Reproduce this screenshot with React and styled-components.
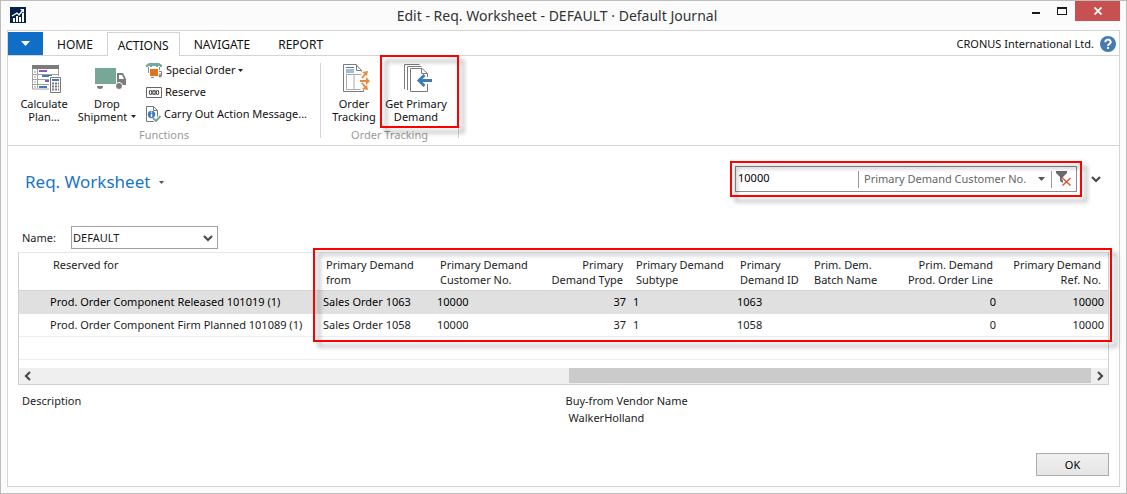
import React from "react";
import styled, { createGlobalStyle } from "styled-components";

const GlobalStyle = createGlobalStyle`
  *, *::before, *::after { box-sizing: border-box; }
  body {
    margin: 0;
    background: #fbfbfb;
    color: #1c1c1c;
    font: 11px/16px "Segoe UI", "Noto Sans", "Open Sans", sans-serif;
  }
  button, input, select { font: inherit; color: inherit; }
  button { background: none; border: 0; padding: 0; cursor: pointer; }
  svg { display: block; flex: none; }
`;

const Window = styled.div`
  display: flex;
  flex-direction: column;
  min-height: 100vh;
  padding: 0 6px 6px;
  border: 1px solid #bdbdbd;
  background: #fbfbfb;
`;

const TitleBar = styled.header`
  display: grid;
  grid-template-columns: 1fr auto 1fr;
  height: 29px;
  padding-left: 3px;
`;

const AppLogo = styled.div`
  padding-top: 6px;
`;

const WindowTitle = styled.div`
  margin-right: 16px;
  color: #333;
  font-size: 14px;
  line-height: 29px;
`;

const WindowButtons = styled.div`
  display: flex;
  justify-content: flex-end;
`;

const WindowButton = styled.button`
  display: flex;
  align-items: center;
  justify-content: center;
  width: ${(p) => (p.$close ? 45 : 26)}px;
  height: 20px;
  background: ${(p) => (p.$close ? "#c75050" : "transparent")};
`;

const Frame = styled.div`
  display: flex;
  flex: 1;
  flex-direction: column;
  border: 1px solid #d4d4d4;
  background: #fff;
`;

const TabBar = styled.nav`
  display: flex;
  height: 25px;
  padding-top: 1px;
  border-bottom: 1px solid #d4d4d4;
`;

const AppMenuButton = styled.button`
  display: flex;
  align-items: center;
  justify-content: center;
  width: 35px;
  height: 23px;
  background: #106ec6;
`;

const Tab = styled.button`
  height: ${(p) => (p.$active ? 24 : 23)}px;
  padding: 2px ${(p) => (p.$active ? 10 : 14)}px 0;
  color: #111;
  font-size: 12px;
  border: solid #d4d4d4;
  border-width: ${(p) => (p.$active ? "1px 1px 0" : "0")};
  background: #fff;
`;

const Company = styled.div`
  display: flex;
  gap: 6px;
  align-items: center;
  margin-left: auto;
  padding-right: 3px;
  color: #111;
`;

const Ribbon = styled.section`
  display: flex;
  height: 90px;
  padding: 7px 0;
  border-bottom: 1px solid #d4d4d4;
`;

const Group = styled.div`
  display: flex;
  flex-direction: column;
  justify-content: space-between;
  width: ${(p) => p.$width}px;
  padding: 0 4px;
  border-right: 1px solid #d4d4d4;
`;

const Commands = styled.div`
  display: flex;
  height: 60px;
`;

const GroupLabel = styled.div`
  color: #9a9a9a;
  line-height: 16px;
  text-align: center;
  white-space: nowrap;
  margin-bottom: -5px;
`;

const LargeCommand = styled.button`
  position: relative;
  display: flex;
  flex-direction: column;
  align-items: center;
  width: ${(p) => p.$width}px;
  color: #111;
  line-height: 13px;
  white-space: nowrap;
`;

const LargeIcon = styled.span`
  display: flex;
  height: 34px;
  padding: 1px 0 0 6px;
`;

const CommandLine = styled.span`
  display: flex;
  gap: 4px;
  align-items: center;
`;

const SmallCommands = styled.div`
  display: flex;
  flex-direction: column;
  padding-left: 8px;
`;

const SmallCommand = styled.button`
  display: flex;
  gap: 3px;
  align-items: center;
  height: 22px;
  padding-bottom: 8px;
  color: #111;
  white-space: nowrap;
`;

const Highlight = styled.span`
  position: absolute;
  inset: ${(p) => p.$inset};
  z-index: 1;
  border: 2px solid #f00;
  filter: drop-shadow(5px 5px 2px rgba(0, 0, 0, 0.35));
  pointer-events: none;
`;

const Page = styled.main`
  display: flex;
  flex: 1;
  flex-direction: column;
  padding: 20px 10px;
  padding-bottom: 10px;
`;

const PageHeader = styled.div`
  display: flex;
  align-items: flex-start;
  justify-content: space-between;
  padding: 0 8px 0 7px;
`;

const PageTitle = styled.h1`
  display: flex;
  gap: 9px;
  align-items: center;
  margin: 4px 0 0;
  color: #1a74c8;
  font-size: 17px;
  font-weight: 400;
  line-height: 24px;
`;

const FilterArea = styled.div`
  display: flex;
  gap: 14px;
  align-items: center;
`;

const FilterBox = styled.form`
  position: relative;
  display: flex;
  align-items: center;
  width: 342px;
  height: 26px;
  border: 1px solid #8c8c8c;
  color: #666;
`;

const FilterInput = styled.input`
  flex: 1;
  min-width: 0;
  height: 22px;
  padding: 0 2px 4px;
  border: 0;
  outline: 0;
  background: none;
  color: #000;
`;

const FieldPicker = styled.div`
  display: flex;
  align-items: center;
  height: 17px;
  padding-right: 6px;
  border: solid #9a9a9a;
  border-width: 0 1px;
`;

const FieldSelect = styled.select`
  width: 179px;
  padding: 0 0 0 5px;
  border: 0;
  appearance: none;
  background: none;
`;

const ClearFilter = styled.button`
  width: 24px;
  padding-left: 4px;
`;

const NameRow = styled.div`
  display: flex;
  align-items: center;
  margin: 32px 0 3px;
  padding-left: 4px;
`;

const NameLabel = styled.label`
  width: 49px;
`;

const SelectBox = styled.div`
  display: flex;
  align-items: center;
  width: 147px;
  height: 23px;
  padding-right: 4px;
  border: 1px solid #a0a0a8;
`;

const NameSelect = styled.select`
  flex: 1;
  height: 21px;
  padding: 0 1px;
  border: 0;
  appearance: none;
  background: none;
`;

const GridBox = styled.div`
  position: relative;
  border: 1px solid #d0d0d0;
  border-top-color: #e6e6e6;
`;

const Grid = styled.table`
  width: 100%;
  border-collapse: separate;
  border-spacing: 0;
  table-layout: fixed;
`;

const Col = styled.col`
  width: ${(p) => (p.$width ? p.$width + "px" : "auto")};
`;

const HeaderCell = styled.th`
  height: 38px;
  padding: 4px ${(p) => (p.$right ? 7 : 0)}px 3px ${(p) => (p.$first ? 34 : p.$right ? 0 : 6)}px;
  border-bottom: 1px solid #d4d4d4;
  font-weight: 400;
  line-height: 15px;
  text-align: ${(p) => (p.$right ? "right" : "left")};
  vertical-align: top;
  white-space: pre;
`;

const Row = styled.tr`
  background: ${(p) => (p.$selected ? "#e0e0e0" : "#fff")};
  color: ${(p) => (p.$selected ? "#000" : "inherit")};
`;

const Cell = styled.td`
  height: 23px;
  padding: 0 4px 0 ${(p) => (p.$first ? 31 : 3)}px;
  border-bottom: 1px solid ${(p) => (p.$selected ? "#e0e0e0" : "#ececec")};
  line-height: 16px;
  text-align: ${(p) => (p.$right ? "right" : "left")};
  white-space: nowrap;
`;

const ScrollBar = styled.div`
  display: flex;
  align-items: center;
  height: 16px;
  margin-top: 8px;
  border-bottom: 1px solid #efefef;
  background: #efefef;
`;

const ScrollButton = styled.button`
  display: flex;
  justify-content: center;
  width: 17px;
`;

const ScrollTrack = styled.div`
  display: flex;
  flex: 1;
  justify-content: flex-end;
  height: 15px;
`;

const ScrollThumb = styled.div`
  width: 49.5%;
  background: #cbcbcb;
`;

const Details = styled.dl`
  display: grid;
  grid-template-columns: 1fr 1fr;
  margin: 8px 0 0;
  padding-left: 4px;
`;

const DetailTerm = styled.dt`
  line-height: 16px;
`;

const DetailValue = styled.dd`
  margin: 0;
  padding-left: 3px;
  line-height: 17px;
`;

const Footer = styled.footer`
  display: flex;
  justify-content: flex-end;
  margin-top: auto;
`;

const OkButton = styled.button`
  width: 73px;
  height: 23px;
  border: 1px solid #acacac;
  background: linear-gradient(#f0f0f0, #e5e5e5);
  color: #000;
`;

const Triangle = ({ width = 5, height = 3, color = "#222" }) => (
  <svg width={width} height={height} viewBox="0 0 10 6" preserveAspectRatio="none" aria-hidden="true">
    <path d="M0 0h10L5 6z" fill={color} />
  </svg>
);

const Chevron = ({ direction = "down", width = 10, height = 10 }) => {
  const paths = { down: "M1 3l4 4 4-4", left: "M7 1L3 5l4 4", right: "M3 1l4 4-4 4" };
  return (
    <svg width={width} height={height} viewBox="0 0 10 10" aria-hidden="true">
      <path d={paths[direction]} fill="none" stroke="#4a4a4a" strokeWidth="2.2" />
    </svg>
  );
};

const LogoIcon = () => (
  <svg width="16" height="16" viewBox="0 0 16 16" aria-hidden="true">
    <path fill="#03214f" d="M0 0h16v16H0z" />
    <path fill="#fff" d="M3 11h2v4H3zM6 9h2v6H6zM9 10h2v5H9zM12 6h2v9h-2z" />
    <path d="M2 9l5-3 2 2 4-5" fill="none" stroke="#fff" strokeWidth="1.3" />
    <path fill="#fff" d="M10 2h4v4z" />
  </svg>
);

const HelpIcon = () => (
  <svg width="16" height="16" viewBox="0 0 16 16" aria-hidden="true">
    <circle cx="8" cy="8" r="8" fill="#457ab3" />
    <path d="M5.3 6.2C5.3 2.8 10.7 2.8 10.7 6c0 2-2.7 2-2.7 4" fill="none" stroke="#fff" strokeWidth="2" />
    <path fill="#fff" d="M7 11h2v2H7z" />
  </svg>
);

const CalculateIcon = () => (
  <svg width="30" height="29" viewBox="0 0 30 29" aria-hidden="true">
    <path fill="#7b7b7b" d="M0 1h27v4H0z" />
    <path d="M.5 5v20H17M26.5 5v7M0 10.5h26M0 15.5h17M0 20.5h17M5.5 5v19" fill="none" stroke="#a2a2a2" />
    <path d="M2 8h2M2 13h2M2 18h2M2 23h2" stroke="#999" />
    <path fill="#8a5cb0" d="M7 6h8v2H7zM13 16h4v2h-4z" />
    <path fill="#3f7bb8" d="M10 11h10v2H10zM7 22h8v2H7z" />
    <path fill="#fff" d="M17 12h13v17H17z" />
    <path fill="#fff" stroke="#777" d="M18.500 13.500h10v15h-10z" />
    <path fill="#3f7bb8" d="M20 15h7v2h-7z" />
    <path d="M20 19.500h7M20 22.500h7M20 25.500h7" stroke="#777" strokeWidth="2" strokeDasharray="2 1" />
  </svg>
);

const TruckIcon = () => (
  <svg width="31" height="29" viewBox="0 0 31 29" aria-hidden="true">
    <path fill="#76a797" d="M0 4h21v16H0z" />
    <path fill="#7b7b7b" fillRule="evenodd" d="M22 9h6l3 6v6h-9zM24 11v4h5l-2-4z" />
    <circle cx="24" cy="22" r="3.500" fill="#7b7b7b" stroke="#fff" />
    <path fill="#7b7b7b" d="M2 22h6c0 2-1 3-3 3s-3-1-3-3z" />
  </svg>
);

const TrackingIcon = () => (
  <svg width="28" height="29" viewBox="0 0 28 29" aria-hidden="true">
    <path d="M18.500 7.500V6.500L13 .500H.500v27h20v-2M13.500.500v6h5" fill="#fff" stroke="#7b7b7b" />
    <path d="M3 3.500h8M3 6h8M3 8h8" stroke="#3f7bb8" />
    <path d="M3.500 10.500h15M3.500 10v15.500h14M11 10v15" fill="none" stroke="#aaa" />
    <path d="M17 17h7M19 14l4-5M19 19l4 5" stroke="#e88b42" strokeWidth="2" fill="none" />
    <path fill="#e88b42" d="M27 17l-4-4v8zM25 7l-6 1 5 4zM25 26l-6-1 5-4z" />
  </svg>
);

const DemandIcon = () => (
  <svg width="30" height="29" viewBox="0 0 30 29" aria-hidden="true">
    <path d="M.500 25V.500h15M3.500 26V2.500h14" fill="none" stroke="#7b7b7b" />
    <path d="M23.500 13V9.500L18 4.500H6.500v23h17V20M17.500 4.500v5h6" fill="#fff" stroke="#7b7b7b" />
    <path d="M15 16.500h13" stroke="#3f7bb8" strokeWidth="3" />
    <path d="M20.500 11L15 16.500l5.500 5.500" stroke="#3f7bb8" strokeWidth="3" fill="none" />
  </svg>
);

const SpecialOrderIcon = () => (
  <svg width="17" height="15" viewBox="0 0 17 15" aria-hidden="true">
    <path fill="#76a797" d="M3 0h10l3 2v2h-2V3h-2v1h-2V3H6v1H4V3H2v1H0V2z" />
    <path d="M2.500 4v6M13.500 4v3" stroke="#8a8a8a" />
    <path fill="#e0731d" d="M4 6h8v7H4z" />
    <path d="M13 8.500h2.500V13M13 11h2" fill="none" stroke="#888" />
    <path d="M5 14.500h3" stroke="#888" />
    <circle cx="14" cy="13" r="1.500" fill="#888" />
  </svg>
);

const ReserveIcon = () => (
  <svg width="16" height="11" viewBox="0 0 16 11" aria-hidden="true">
    <path d="M.500.500h15v10H.500z" fill="#fff" stroke="#666" />
    <path d="M3 3h10v5H3z" fill="#aaa" />
    <g fill="#fff" stroke="#444">
      <ellipse cx="4.500" cy="5.500" rx="1.200" ry="2" />
      <ellipse cx="8" cy="5.500" rx="1.200" ry="2" />
      <ellipse cx="11.500" cy="5.500" rx="1.200" ry="2" />
    </g>
  </svg>
);

const CarryOutIcon = () => (
  <svg width="15" height="16" viewBox="0 0 15 16" aria-hidden="true">
    <path d="M.500.500h7l4 4v11H.500zM7.500.500v4h4" fill="#fff" stroke="#777" />
    <circle cx="5.500" cy="8.500" r="3.700" fill="#3f7bb8" />
    <path d="M5.500 5.500v1.300M5.500 7.800V11" stroke="#fff" strokeWidth="1.400" />
    <path d="M7 12l3 3 4.500-5" fill="none" stroke="#fff" strokeWidth="4" />
    <path d="M7 12l3 3 4.500-5" fill="none" stroke="#76a797" strokeWidth="2" />
  </svg>
);

const ClearFilterIcon = () => (
  <svg width="16" height="16" viewBox="0 0 16 16" aria-hidden="true">
    <path fill="#6a6a6a" d="M0 0h11v2L7 6v6l-3-2V6L0 2z" />
    <path d="M6.500 7l8 7.500M14.500 7l-8 7.500" stroke="#fff" strokeWidth="3" />
    <path d="M6.500 7l8 7.500M14.500 7l-8 7.500" stroke="#dc5a3c" strokeWidth="1.600" />
  </svg>
);

const columns = [
  { label: "Reserved for" },
  { label: "Primary Demand\nfrom", width: 114 },
  { label: "Primary Demand\nCustomer No.", width: 108 },
  { label: "Primary\nDemand Type", width: 88, right: true },
  { label: "Primary Demand\nSubtype", width: 104 },
  { label: "Primary\nDemand ID", width: 74 },
  { label: "Prim. Dem.\nBatch Name", width: 86 },
  { label: "Prim. Demand\nProd. Order Line", width: 106, right: true },
  { label: "Primary Demand\nRef. No.", width: 108, right: true },
];

const rows = [
  ["Prod. Order Component Released 101019 (1)", "Sales Order 1063", "10000", "37", "1", "1063", "", "0", "10000"],
  ["Prod. Order Component Firm Planned 101089 (1)", "Sales Order 1058", "10000", "37", "1", "1058", "", "0", "10000"],
  ["", "", "", "", "", "", "", "", ""],
];

export default function App() {
  return (
    <>
      <GlobalStyle />
      <Window>
        <TitleBar>
          <AppLogo><LogoIcon /></AppLogo>
          <WindowTitle>Edit - Req. Worksheet - DEFAULT · Default Journal</WindowTitle>
          <WindowButtons>
            <WindowButton aria-label="Minimize">
              <svg width="8" height="8"><path fill="#1a1a1a" d="M0 5h8v2H0z" /></svg>
            </WindowButton>
            <WindowButton aria-label="Maximize">
              <svg width="10" height="8"><path fill="#1a1a1a" fillRule="evenodd" d="M0 0h10v8H0zM1 2v5h8V2z" /></svg>
            </WindowButton>
            <WindowButton $close aria-label="Close">
              <svg width="8" height="8"><path d="M.500.500l7 7M7.500.500l-7 7" stroke="#fff" strokeWidth="1.800" /></svg>
            </WindowButton>
          </WindowButtons>
        </TitleBar>

        <Frame>
          <TabBar>
            <AppMenuButton aria-label="Application menu">
              <Triangle width={9} height={5} color="#fff" />
            </AppMenuButton>
            <Tab>HOME</Tab>
            <Tab $active>ACTIONS</Tab>
            <Tab>NAVIGATE</Tab>
            <Tab>REPORT</Tab>
            <Company>
              CRONUS International Ltd.
              <button aria-label="Help"><HelpIcon /></button>
            </Company>
          </TabBar>

          <Ribbon>
            <Group $width={313}>
              <Commands>
                <LargeCommand $width={64}>
                  <LargeIcon><CalculateIcon /></LargeIcon>
                  <CommandLine>Calculate</CommandLine>
                  <CommandLine>Plan...</CommandLine>
                </LargeCommand>
                <LargeCommand $width={62}>
                  <LargeIcon><TruckIcon /></LargeIcon>
                  <CommandLine>Drop</CommandLine>
                  <CommandLine>Shipment <Triangle /></CommandLine>
                </LargeCommand>
                <SmallCommands>
                  <SmallCommand><SpecialOrderIcon />Special Order <Triangle /></SmallCommand>
                  <SmallCommand><ReserveIcon />Reserve</SmallCommand>
                  <SmallCommand><CarryOutIcon />Carry Out Action Message...</SmallCommand>
                </SmallCommands>
              </Commands>
              <GroupLabel>Functions</GroupLabel>
            </Group>
            <Group $width={138}>
              <Commands>
                <LargeCommand $width={58}>
                  <LargeIcon><TrackingIcon /></LargeIcon>
                  <CommandLine>Order</CommandLine>
                  <CommandLine>Tracking</CommandLine>
                </LargeCommand>
                <LargeCommand $width={66}>
                  <LargeIcon><DemandIcon /></LargeIcon>
                  <CommandLine>Get Primary</CommandLine>
                  <CommandLine>Demand</CommandLine>
                  <Highlight $inset="-8px -10px -5px -3px" />
                </LargeCommand>
              </Commands>
              <GroupLabel>Order Tracking</GroupLabel>
            </Group>
          </Ribbon>

          <Page>
            <PageHeader>
              <PageTitle>
                Req. Worksheet
                <button aria-label="Page menu"><Triangle color="#555" /></button>
              </PageTitle>
              <FilterArea>
                <FilterBox>
                  <FilterInput aria-label="Filter value" defaultValue="10000" />
                  <FieldPicker>
                    <FieldSelect aria-label="Filter field" defaultValue="customer">
                      <option value="customer">Primary Demand Customer No.</option>
                    </FieldSelect>
                    <Triangle width={7} height={4} color="#555" />
                  </FieldPicker>
                  <ClearFilter type="button" aria-label="Clear filter"><ClearFilterIcon /></ClearFilter>
                  <Highlight $inset="-6px" />
                </FilterBox>
                <button aria-label="Expand filters"><Chevron /></button>
              </FilterArea>
            </PageHeader>

            <NameRow>
              <NameLabel htmlFor="worksheet-name">Name:</NameLabel>
              <SelectBox>
                <NameSelect id="worksheet-name" defaultValue="DEFAULT">
                  <option>DEFAULT</option>
                </NameSelect>
                <Chevron />
              </SelectBox>
            </NameRow>

            <GridBox>
              <Grid>
                <colgroup>
                  {columns.map((c) => <Col key={c.label} $width={c.width} />)}
                </colgroup>
                <thead>
                  <tr>
                    {columns.map((c, i) => (
                      <HeaderCell key={c.label} scope="col" $first={i === 0} $right={c.right}>{c.label}</HeaderCell>
                    ))}
                  </tr>
                </thead>
                <tbody>
                  {rows.map((row, r) => (
                    <Row key={r} $selected={r === 0}>
                      {row.map((value, i) => (
                        <Cell key={i} $first={i === 0} $right={columns[i].right} $selected={r === 0}>{value}</Cell>
                      ))}
                    </Row>
                  ))}
                </tbody>
              </Grid>
              <ScrollBar>
                <ScrollButton aria-label="Scroll left"><Chevron direction="left" /></ScrollButton>
                <ScrollTrack><ScrollThumb /></ScrollTrack>
                <ScrollButton aria-label="Scroll right"><Chevron direction="right" /></ScrollButton>
              </ScrollBar>
              <Highlight $inset="-5px -4px 42px 294px" />
            </GridBox>

            <Details>
              <div>
                <DetailTerm>Description</DetailTerm>
              </div>
              <div>
                <DetailTerm>Buy-from Vendor Name</DetailTerm>
                <DetailValue>WalkerHolland</DetailValue>
              </div>
            </Details>

            <Footer>
              <OkButton>OK</OkButton>
            </Footer>
          </Page>
        </Frame>
      </Window>
    </>
  );
}
